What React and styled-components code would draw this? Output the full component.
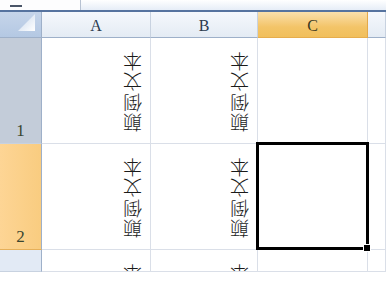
import styled, { createGlobalStyle } from "styled-components";

const GlobalStyle = createGlobalStyle`
  html, body {
    margin: 0;
    padding: 0;
    background: #fff;
    width: 386px;
    height: 287px;
    overflow: hidden;
  }
`;

const cols = ["A", "B", "C"];
const rows = [
  { num: "1", kind: "normal" },
  { num: "2", kind: "active" },
  { num: "", kind: "light" },
];

const App = () => {
  return (
    <Sheet>
      <GlobalStyle />
      <TopStrip>
        <Tab>
          <Dash />
        </Tab>
        <TabRest />
      </TopStrip>
      <Grid>
        <Corner>
          <svg width="20" height="20" viewBox="0 0 20 20">
            <defs>
              <linearGradient id="tri" x1="0" y1="0" x2="1" y2="1">
                <stop offset="0" stopColor="#c9d8ec" />
                <stop offset="1" stopColor="#ffffff" />
              </linearGradient>
            </defs>
            <polygon points="18,1 18,18 1,18" fill="url(#tri)" />
          </svg>
        </Corner>
        {cols.map((c) => (
          <ColHead key={c} $active={c === "C"}>
            {c}
          </ColHead>
        ))}
        <ColHead />
        {rows.map((r) => (
          <Row key={r.kind} r={r} />
        ))}
      </Grid>
    </Sheet>
  );
};

const Row = ({ r }) => (
  <>
    <RowHead $kind={r.kind}>{r.num}</RowHead>
    <Cell>
      <Flipped>颠倒文本</Flipped>
    </Cell>
    <Cell>
      <Flipped>颠倒文本</Flipped>
    </Cell>
    <Cell $selected={r.kind === "active"} />
    <Cell />
  </>
);

export default App;

const Sheet = styled.div`
  width: 386px;
  height: 287px;
  background: #fff;
  overflow: hidden;
`;

const TopStrip = styled.div`
  display: flex;
  box-sizing: border-box;
  height: 12px;
  border-bottom: 2px solid #56739f;
`;

const Tab = styled.div`
  width: 80px;
  background: #fdfdfe;
  border-right: 1px solid #b7c2d2;
  position: relative;
`;

const Dash = styled.div`
  position: absolute;
  left: 10px;
  top: 5px;
  width: 12px;
  height: 2px;
  background: #4a5568;
`;

const TabRest = styled.div`
  flex: 1;
  background: linear-gradient(#ffffff, #e6edf7);
`;

const Grid = styled.div`
  display: grid;
  grid-template-columns: 42px 109px 107px 110px 18px;
  grid-template-rows: 26px 106px 106px 22px;
  font-family: "Liberation Serif", serif;
`;

const Corner = styled.div`
  background: linear-gradient(#c6d5ea, #b4c8e3);
  border-right: 1px solid #9eb0c9;
  border-bottom: 1px solid #9eb0c9;
  box-sizing: border-box;
  display: flex;
  align-items: flex-end;
  justify-content: flex-end;
  padding: 0 4px 4px 0;
`;

const ColHead = styled.div`
  box-sizing: border-box;
  display: flex;
  align-items: center;
  justify-content: center;
  font-size: 16px;
  color: ${(p) => (p.$active ? "#3d3a22" : "#2b3a4f")};
  background: ${(p) =>
    p.$active
      ? "linear-gradient(#fbe0ac, #f3c468 60%, #f1bf5c)"
      : "linear-gradient(#f5f8fc, #e4ebf4)"};
  border-right: 1px solid ${(p) => (p.$active ? "#e3a94a" : "#c8d2e0")};
  border-bottom: 1px solid ${(p) => (p.$active ? "#e6ad4d" : "#9eb0c9")};
  padding-top: 2px;
`;

const rowBg = {
  normal: "#c3ccd9",
  active: "linear-gradient(90deg, #fdd595, #f9cc80)",
  light: "#e2eaf5",
};

const RowHead = styled.div`
  box-sizing: border-box;
  background: ${(p) => rowBg[p.$kind]};
  border-right: 1px solid #9eb0c9;
  border-bottom: 1px solid ${(p) => (p.$kind === "active" ? "#e6b05a" : "#c8d2e0")};
  display: flex;
  align-items: flex-end;
  justify-content: center;
  padding-bottom: 2px;
  font-size: 17px;
  color: #3a4530;
`;

const Cell = styled.div`
  box-sizing: border-box;
  border-right: 1px solid #dadfe8;
  border-bottom: 1px solid #dadfe8;
  display: flex;
  justify-content: flex-end;
  align-items: flex-start;
  padding: 12px 7px 0 0;
  overflow: hidden;
  position: relative;

  ${(p) =>
    p.$selected &&
    `
    overflow: visible;
    &::after {
      content: "";
      position: absolute;
      left: -2px;
      top: -2px;
      right: -2px;
      bottom: -1px;
      border: 3px solid #000;
      z-index: 2;
    }
    &::before {
      content: "";
      position: absolute;
      right: -4px;
      bottom: -3px;
      width: 6px;
      height: 6px;
      background: #000;
      border: 1px solid #fff;
      z-index: 3;
    }
  `}
`;

const Flipped = styled.span`
  writing-mode: vertical-rl;
  transform: rotate(180deg);
  font-family: "Noto Sans CJK SC", sans-serif;
  font-size: 19px;
  font-weight: 300;
  line-height: 21px;
  letter-spacing: 1.5px;
  color: #1a1a1a;
  white-space: nowrap;
`;
